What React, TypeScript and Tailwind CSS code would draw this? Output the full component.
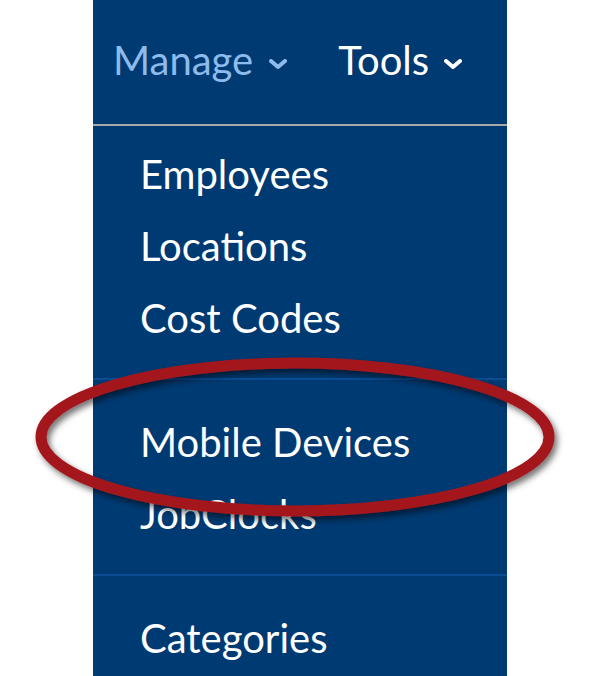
import React from 'react';

const groups = [
  ['Employees', 'Locations', 'Cost Codes'],
  ['Mobile Devices', 'JobClocks'],
  ['Categories'],
];

function Chevron({ color }: { color: string }) {
  return (
    <svg width="18" height="10" viewBox="0 0 18 10" className="shrink-0">
      <polyline points="2,2 9,8 16,2" fill="none" stroke={color} strokeWidth="4" strokeLinecap="round" strokeLinejoin="round" />
    </svg>
  );
}

export default function App() {
  return (
    <div className="relative w-[600px] h-[676px] bg-white overflow-hidden font-['Lato','Liberation_Sans',sans-serif]">
      <div className="ml-[93px] w-[414px] h-full bg-[#003a72]">
        <div className="h-[126px] border-b-2 border-[#a8a8a8] pt-[24px] pl-[20px] flex items-start">
          <div className="flex items-center h-[72px] text-[40px] leading-[72px] text-[#8cbbec]">
            <span>Manage</span>
            <span className="ml-[16px] mt-[8px]"><Chevron color="#8cbbec" /></span>
          </div>
          <div className="flex items-center h-[72px] ml-[51px] text-[40px] leading-[72px] text-white">
            <span>Tools</span>
            <span className="ml-[15px] mt-[8px]"><Chevron color="#ffffff" /></span>
          </div>
        </div>

        <ul className="pt-[12px]">
          {groups.map((items, gi) => (
            <li key={gi} className={gi > 0 ? 'border-t-2 border-[#0a4d95] pt-[26px] mt-[24px]' : ''}>
              {items.map((label) => (
                <div key={label} className="pl-[47px] text-[40px] leading-[72px] text-white">
                  {label}
                </div>
              ))}
            </li>
          ))}
        </ul>
      </div>

      {/* annotation ring */}
      <svg className="absolute left-0 top-0 pointer-events-none" width="600" height="676" viewBox="0 0 600 676">
        <defs>
          <filter id="ringShadow" x="-10%" y="-30%" width="120%" height="160%">
            <feDropShadow dx="3" dy="4" stdDeviation="3" floodColor="#000" floodOpacity="0.55" />
          </filter>
        </defs>
        <ellipse cx="295" cy="437" rx="254" ry="74" fill="none" stroke="#a3191f" strokeWidth="11" filter="url(#ringShadow)" />
      </svg>
    </div>
  );
}
